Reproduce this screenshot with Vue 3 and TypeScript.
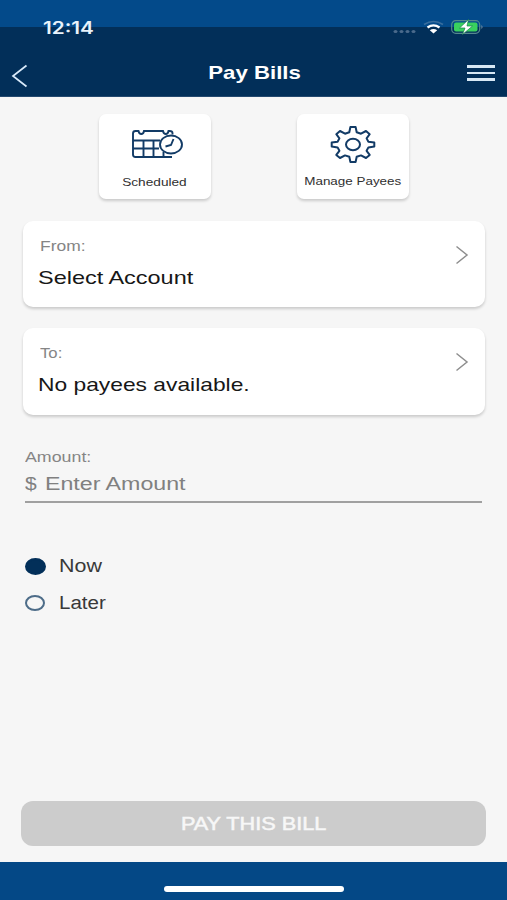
<script setup lang="ts">
import { ref } from 'vue'

type When = 'now' | 'later'

const when = ref<When>('now')
const accounts: { label: string; value: string }[] = [
  { label: 'From:', value: 'Select Account' },
  { label: 'To:', value: 'No payees available.' },
]
const options: { id: When; label: string }[] = [
  { id: 'now', label: 'Now' },
  { id: 'later', label: 'Later' },
]
</script>

<template>
  <div class="screen">
    <header class="top">
      <div class="status">
        <span class="time wide">12:14</span>
        <svg class="indicators" width="92" height="20" viewBox="0 0 92 20">
          <g fill="#4a6a8c">
            <ellipse cx="3.5" cy="12.5" rx="2" ry="1.6" />
            <ellipse cx="9.5" cy="12.5" rx="2" ry="1.6" />
            <ellipse cx="15.5" cy="12.5" rx="2" ry="1.6" />
            <ellipse cx="21.5" cy="12.5" rx="2" ry="1.6" />
          </g>
          <path d="M32 5.500Q41.500-.5 51 5.500" fill="none" stroke="#386d9d" stroke-width="1.700" />
          <path d="M35.500 8.500Q41.500 4.300 47.500 8.500" fill="none" stroke="#fff" stroke-width="2.300" />
          <path d="M37.800 11.200Q41.500 8.700 45.200 11.200L41.500 14.600Z" fill="#fff" />
          <rect x="59.700" y="1.700" width="28" height="12.600" rx="4" fill="none" stroke="#55888e" stroke-width="1.200" />
          <rect x="62" y="3.500" width="23.500" height="9" rx="2" fill="#39d05e" />
          <path d="M89.300 6Q92 8 89.300 10Z" fill="#67859f" />
          <path d="M76.500.500L67.500 9H73L70.500 15.500L80.500 7H75Z" fill="#fff" stroke="#168249" stroke-width=".7" />
        </svg>
      </div>
      <nav class="nav">
        <svg width="18" height="24" viewBox="0 0 18 24">
          <path d="M15.500 1.500L2 12L15.500 22.500" fill="none" stroke="#d9eafa" stroke-width="1.700" />
        </svg>
        <h1 class="title"><span class="wide center">Pay Bills</span></h1>
        <div class="menu"><i></i><i></i><i></i></div>
      </nav>
    </header>

    <main class="body">
      <div class="tiles">
        <button class="tile">
          <svg width="52" height="32" viewBox="0 0 52 32" fill="none" stroke="#123b66" stroke-width="1.900">
            <path d="M41.500 6.500V5Q41.500 3 38.500 3H37.500Q37 6 34.800 6T32 3H13Q12.500 6 10.300 6T7.500 3H4.500Q2 3 2 5.500V26.500Q2 29 4.500 29H41" />
            <path d="M2 12.500H29M2 20.500H28M12.500 12.500V29M22.500 12.500V29M32.500 24V29" />
            <ellipse cx="40" cy="16.500" rx="11" ry="9" />
            <path d="M42.500 11L40 17L34.500 18.500" />
          </svg>
          <span class="wide center">Scheduled</span>
        </button>
        <button class="tile payees">
          <svg width="46" height="38" viewBox="0 0 46 38" fill="none" stroke="#123b66" stroke-width="2" stroke-linejoin="round">
            <path d="M20.400 2H25.600L26.700 7.200L31 8.700L36 6L39.700 9.200L36.600 13.400L38.400 16.800L44.300 17.600V21.400L38.400 22.400L36.600 25.800L39.700 29.900L36 33L31 30.400L26.700 31.800L25.600 37H20.400L19.300 31.800L15 30.400L10 33L6.300 29.900L9.400 25.800L7.600 22.400L1.700 21.400V17.600L7.600 16.800L9.400 13.400L6.300 9.200L10 6L15 8.700L19.300 7.200Z" />
            <ellipse cx="23" cy="19.500" rx="7" ry="5.800" />
          </svg>
          <span class="wide center">Manage Payees</span>
        </button>
      </div>

      <section v-for="item in accounts" :key="item.label" class="card">
        <div class="card-text">
          <span class="label wide">{{ item.label }}</span>
          <span class="value wide">{{ item.value }}</span>
        </div>
        <svg width="14" height="20" viewBox="0 0 14 20">
          <path d="M1.500 1.500L12 10L1.500 18.500" fill="none" stroke="#8e8e8e" stroke-width="1.500" />
        </svg>
      </section>

      <div class="amount">
        <span class="label wide">Amount:</span>
        <div class="entry">
          <span class="dollar wide">$</span>
          <span class="placeholder wide">Enter Amount</span>
        </div>
      </div>

      <div class="options">
        <label v-for="o in options" :key="o.id" class="option" :class="o.id" @click="when = o.id">
          <i class="radio" :class="{ on: when === o.id }"></i>
          <span class="wide">{{ o.label }}</span>
        </label>
      </div>

      <button class="pay"><span class="wide center">PAY THIS BILL</span></button>
    </main>

    <footer class="bottom"><i class="home"></i></footer>
  </div>
</template>

<style>
body {
  margin: 0;
}
</style>

<style scoped>
.screen {
  width: 507px;
  height: 900px;
  display: flex;
  flex-direction: column;
  background: #f6f6f6;
  font-family: 'Liberation Sans', Arial, sans-serif;
  overflow: hidden;
}
.wide {
  display: inline-block;
  white-space: nowrap;
  transform: scaleX(1.22);
  transform-origin: left center;
}
.wide.center {
  transform-origin: center;
}
.top {
  height: 97px;
  box-sizing: border-box;
  background: linear-gradient(#034a8a 0 27px, #022f59 27px);
  border-bottom: 1px solid #24496f;
}
.status {
  height: 48px;
  box-sizing: border-box;
  padding: 18px 23px 0 43px;
  display: flex;
  justify-content: space-between;
  align-items: flex-start;
}
.time {
  font: 600 17px/20px Inter, sans-serif;
  color: #e9f3fb;
  transform: scaleX(1.22);
}
.indicators {
  margin-top: 1px;
}
.nav {
  height: 48px;
  box-sizing: border-box;
  padding: 2px 12px 0 11px;
  display: grid;
  grid-template-columns: 28px 1fr 28px;
  align-items: center;
}
.nav > svg {
  margin-top: 5px;
}
.title {
  margin: 0;
  padding-left: 3px;
  color: #fff;
  text-align: center;
  font-size: 18.5px;
  line-height: 24px;
}
.title .wide {
  transform: scaleX(1.2);
}
.menu {
  display: flex;
  flex-direction: column;
  gap: 4px;
}
.menu i {
  height: 2.5px;
  background: #d7e8f5;
}
.body {
  flex: 1;
  display: flex;
  flex-direction: column;
  padding: 17px 21px 16px;
}
.tiles {
  display: flex;
  justify-content: space-between;
  padding: 0 77px 0 78px;
}
button {
  border: 0;
  font-family: inherit;
}
.tile {
  width: 112px;
  height: 85px;
  padding: 14px 0 0;
  display: flex;
  flex-direction: column;
  align-items: center;
  gap: 15px;
  border-radius: 7px;
  background: #fff;
  box-shadow: 0 2px 3px rgba(0, 0, 0, 0.18);
  color: #303030;
  font-size: 11.2px;
  line-height: 14px;
}
.tile svg {
  margin-left: 4px;
}
.tile .wide {
  margin-right: 1px;
}
.tile.payees {
  padding-top: 11px;
  gap: 11px;
  font-size: 11px;
}
.tile.payees svg {
  margin-left: 0;
}
.tile.payees .wide {
  margin-right: 0;
}
.card {
  height: 86px;
  box-sizing: border-box;
  margin: 22px 1px 0 2px;
  padding: 16px 16px 0 15px;
  display: flex;
  justify-content: space-between;
  align-items: flex-start;
  border-radius: 10px;
  background: #fff;
  box-shadow: 0 2px 3px rgba(0, 0, 0, 0.18);
}
.card + .card {
  margin-top: 21px;
  height: 87px;
}
.card svg {
  margin-top: 8px;
}
.card-text {
  display: flex;
  flex-direction: column;
  align-items: flex-start;
}
.label {
  font-size: 14.3px;
  line-height: 18px;
  color: #858585;
}
.card .label {
  margin-left: 2px;
}
.value {
  margin-top: 11px;
  font-size: 19px;
  line-height: 24px;
  color: #171717;
  transform: scaleX(1.235);
}
.card + .card .value {
  transform: scaleX(1.2);
}
.card + .card .label {
  transform: scaleX(1.17);
}
.amount {
  margin: 33px 4px 0;
  display: flex;
  flex-direction: column;
  align-items: flex-start;
}
.amount .label {
  transform: scaleX(1.245);
}
.entry {
  align-self: stretch;
  height: 37px;
  box-sizing: border-box;
  padding-top: 6px;
  display: flex;
  border-bottom: 2px solid #a0a0a0;
  font-size: 18.8px;
  line-height: 24px;
  color: #808080;
}
.dollar {
  width: 20px;
  transform: scaleX(1.12);
}
.placeholder {
  transform: scaleX(1.235);
}
.options {
  margin: 51px 4px 0;
  display: flex;
  flex-direction: column;
  gap: 13px;
}
.option {
  display: flex;
  align-items: center;
  gap: 13px;
  font-size: 18px;
  line-height: 24px;
  color: #393939;
}
.option .wide {
  transform: scaleX(1.19);
}
.option.later .wide {
  transform: scaleX(1.14);
}
.radio {
  width: 20px;
  height: 16px;
  box-sizing: border-box;
  margin-right: 1px;
  border: 2px solid #4d6c88;
  border-radius: 50%;
}
.radio.on {
  width: 21px;
  height: 17px;
  margin-right: 0;
  border-color: #022f59;
  background: #022f59;
}
.pay {
  height: 45px;
  margin-top: auto;
  border-radius: 12px;
  background: #ccc;
  color: #f7f7f7;
  font-size: 17.8px;
  line-height: 24px;
  -webkit-text-stroke: 0.5px #f7f7f7;
}
.bottom {
  height: 38px;
  display: flex;
  justify-content: center;
  align-items: flex-start;
  background: #044886;
}
.home {
  width: 180px;
  height: 6px;
  margin-top: 24px;
  border-radius: 3px;
  background: #fff;
}
</style>
